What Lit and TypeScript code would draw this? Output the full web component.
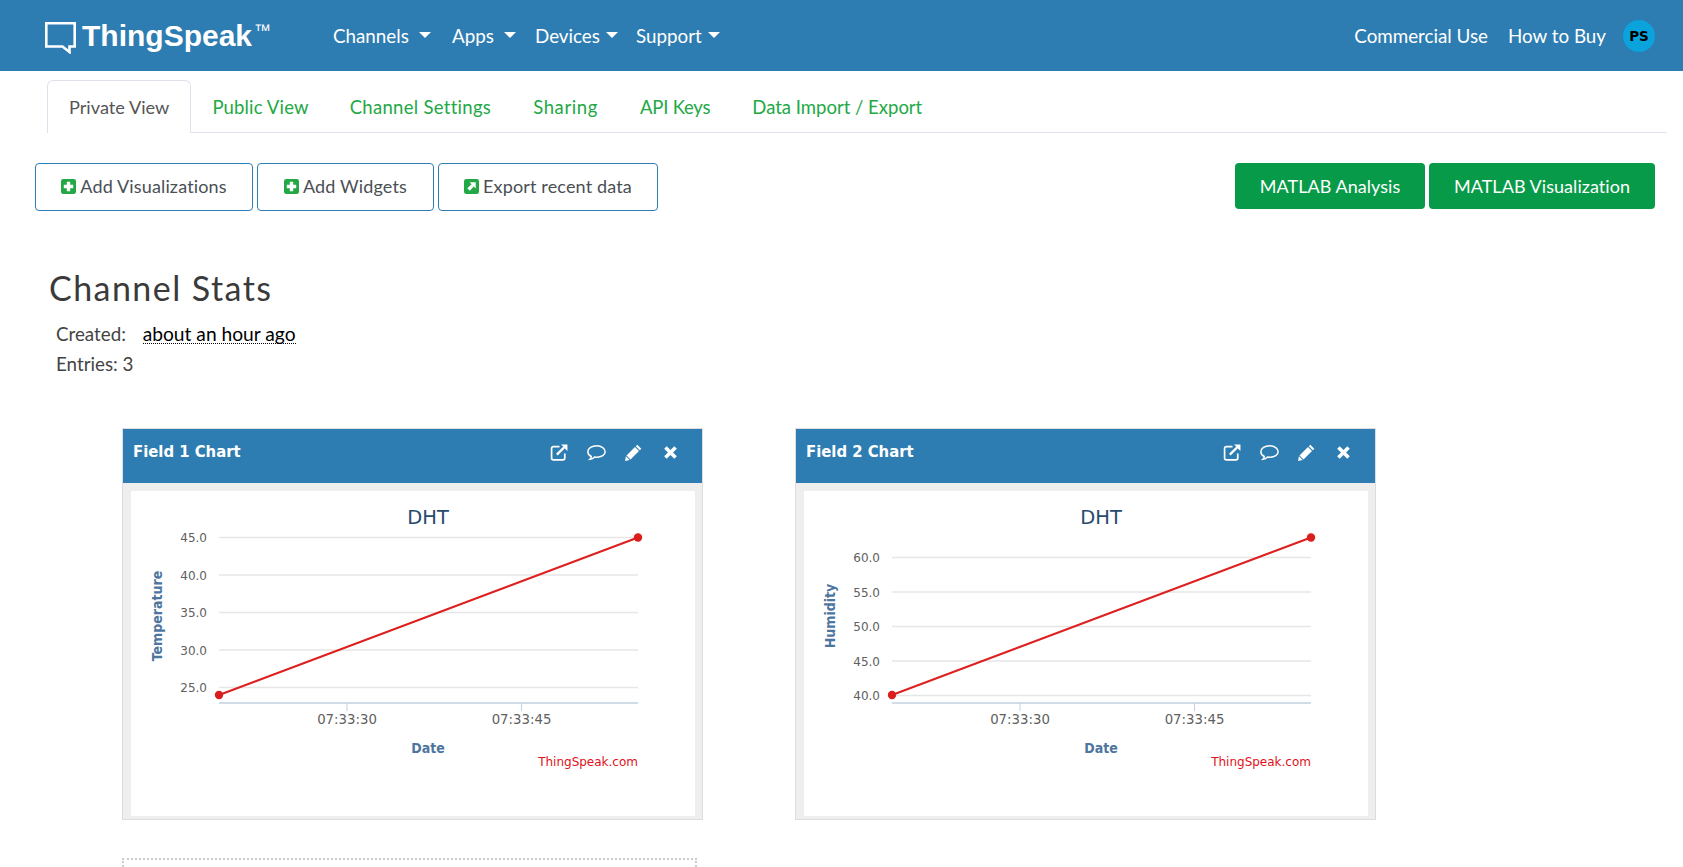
import { LitElement, html, css, svg } from "lit";
import { customElement } from "lit/decorators.js";

interface ChartData {
  title: string;
  yTitle: string;
  grid: { label: string; y: number }[];
  startY: number;
}

const CHARTS: ChartData[] = [
  {
    title: "Field 1 Chart",
    yTitle: "Temperature",
    grid: [
      { label: "45.0", y: 46.5 },
      { label: "40.0", y: 84 },
      { label: "35.0", y: 121.5 },
      { label: "30.0", y: 159 },
      { label: "25.0", y: 196.5 },
    ],
    startY: 204,
  },
  {
    title: "Field 2 Chart",
    yTitle: "Humidity",
    grid: [
      { label: "60.0", y: 66.5 },
      { label: "55.0", y: 101 },
      { label: "50.0", y: 135.5 },
      { label: "45.0", y: 170 },
      { label: "40.0", y: 204.5 },
    ],
    startY: 204,
  },
];

const plus = html`<svg class="bi" viewBox="0 0 16 16"><rect width="16" height="16" rx="2.5" fill="#22a845"/><path d="M6.2 3h3.6v3.2H13v3.6H9.8V13H6.2V9.8H3V6.2h3.2z" fill="#fff"/></svg>`;
const exportIcon = html`<svg class="bi" viewBox="0 0 16 16"><rect width="16" height="16" rx="2.5" fill="#22a845"/><path d="M6 3.5h6.5V10L10.4 7.9 6.2 12.5 3.5 9.8 8.1 5.6z" fill="#fff"/></svg>`;

const caret = html`<span class="caret"></span>`;

@customElement("app-root")
export class AppRoot extends LitElement {
  static styles = css`
    :host { display: block; height: 867px; overflow: hidden; background: #fff; font-family: "Lato", "Liberation Sans", sans-serif; color: #444; }
    .nav { height: 71px; background: #2e7db2; color: #fff; display: flex; align-items: center; padding: 0 28px 0 45px; box-sizing: border-box; }
    .logo { display: flex; align-items: center; width: 288px; flex: none; margin-top: 5px; }
    .logo svg { width: 31px; height: 32px; margin-right: 6px; flex: none; }
    .brand { font: bold 30px "Liberation Sans", sans-serif; line-height: 32px; margin-top: -4px; }
    .brand sup { font-size: 17px; font-weight: normal; line-height: 0; vertical-align: 10px; margin-left: 2px; }
    .menu { display: flex; font-size: 18.8px; }
    .menu span.item { display: flex; align-items: center; }
    .caret { display: inline-block; width: 0; height: 0; border-left: 6px solid transparent; border-right: 6px solid transparent; border-top: 6px solid #fff; margin-left: 6px; margin-top: -2px; }
    .spaced .caret { margin-left: 10px; }
    .i-channels { width: 119px; } .i-apps { width: 83px; } .i-devices { width: 101px; }
    .right { margin-left: auto; display: flex; align-items: center; font-size: 18.8px; }
    .right span.link { margin-right: 20px; }
    .right span.link + .avatar { margin-left: -3px; }
    .avatar { width: 32px; height: 32px; border-radius: 50%; background: #0aa3dc; color: #000; font: bold 13.5px "DejaVu Sans", sans-serif; display: flex; align-items: center; justify-content: center; }
    .tabs { margin: 9px 16px 0 47px; display: flex; height: 52px; border-bottom: 1px solid #dfe2ea; }
    .tab { padding: 1px 20px 0; margin-right: 2px; font-size: 18.5px; letter-spacing: .15px; color: #22a845; display: flex; align-items: center; box-sizing: border-box; height: 52px; }
    .tab.active { color: #555; background: #fff; font-size: 18.2px; letter-spacing: 0; height: 53px; border: 1px solid #dfe2ea; border-bottom: none; border-radius: 6px 6px 0 0; padding: 0 21px; margin-right: 1px; }
    .tab.public { margin-right: 1px; }
    .tab.settings { letter-spacing: .3px; }
    .tab.sharing { letter-spacing: .6px; }
    .tab.keys { letter-spacing: -.2px; }
    .tab.data { letter-spacing: 0; }
    .actions { display: flex; padding: 30px 28px 0 35px; }
    .btn { height: 48px; box-sizing: border-box; border: 1px solid #2e7db2; border-radius: 4px; display: flex; align-items: center; justify-content: center; font-size: 18px; letter-spacing: .15px; color: #4a4f55; background: #fff; margin-right: 4px; gap: 4px; padding-bottom: 2px; }
    .b1 { width: 218px; } .b2 { width: 177px; } .b3 { width: 220px; margin-right: 0; }
    .bi { width: 15px; height: 15px; flex: none; }
    .green { height: 46px; background: #079a48; border-radius: 4px; color: #fff; font-size: 18px; letter-spacing: .05px; display: flex; align-items: center; justify-content: center; padding-bottom: 1px; box-sizing: border-box; }
    .g1 { width: 190px; margin-left: auto; margin-right: 4px; }
    .g2 { width: 226px; }
    h1 { margin: 0; font-weight: 400; font-size: 34px; letter-spacing: 1.45px; color: #3a3a3a; line-height: 40px; padding: 57px 0 0 49px; }
    .stats { padding: 11px 0 0 56px; font-size: 18.8px; line-height: 30px; color: #444; }
    .ago { color: #000; border-bottom: 1px dotted #000; margin-left: 12px; line-height: 18px; display: inline-block; font-size: 19.2px; }
    .charts { display: flex; padding: 49px 0 0 122px; gap: 92px; }
    .box { width: 581px; height: 392px; box-sizing: border-box; border: 1px solid #ddd; background: #eee; display: flex; flex-direction: column; }
    .head { height: 54px; background: #2e7db2; color: #fff; display: flex; align-items: flex-start; padding: 14px 0 0 10px; box-sizing: border-box; flex: none; }
    .ctitle { font: bold 16.5px "DejaVu Sans Condensed", "DejaVu Sans", sans-serif; line-height: 18px; }
    .tools { margin-left: auto; display: flex; gap: 18px; margin-right: 22px; margin-top: 0; }
    .tools svg { width: 19px; height: 19px; display: block; }
    .inner { margin: 8px 7px 0 8px; background: #fff; height: 325px; flex: none; }
    .inner svg { display: block; }
    .dotted { margin: 38px 0 0 122px; width: 575px; height: 40px; box-sizing: border-box; border: 2px dotted #ccc; }
    text { font-family: "DejaVu Sans", sans-serif; }
    .t-title { font-size: 19.5px; fill: #274b6d; text-anchor: middle; }
    .t-label { font-size: 12px; fill: #606060; }
    .t-tick { font-size: 13.3px; fill: #606060; text-anchor: middle; }
    .t-axis { font-family: "DejaVu Sans Condensed", "DejaVu Sans", sans-serif; font-size: 14px; font-weight: bold; fill: #4d759e; text-anchor: middle; }
    .t-credit { font-size: 12px; fill: #e01020; text-anchor: end; }
  `;

  private chart(c: ChartData) {
    const x0 = 88, x1 = 507;
    return html`<svg width="566" height="325" viewBox="0 0 566 325">
      <text class="t-title" x="297" y="33">DHT</text>
      ${c.grid.map(
        (g) => svg`<line x1=${x0} x2=${x1} y1=${g.y} y2=${g.y} stroke="#e6e6e6" stroke-width="1.5"/>
        <text class="t-label" x="76" y=${g.y + 4.5} text-anchor="end">${g.label}</text>`
      )}
      <line x1=${x0} x2=${x1} y1="212" y2="212" stroke="#c0d0e0" stroke-width="1.5"/>
      <line x1="216" x2="216" y1="212" y2="220" stroke="#c0d0e0"/>
      <line x1="390.5" x2="390.5" y1="212" y2="220" stroke="#c0d0e0"/>
      <text class="t-tick" x="216" y="232.5">07:33:30</text>
      <text class="t-tick" x="390.5" y="232.5">07:33:45</text>
      <text class="t-axis" x="297" y="262">Date</text>
      <text class="t-axis" transform="translate(31 125) rotate(-90)">${c.yTitle}</text>
      <text class="t-credit" x=${x1} y="275">ThingSpeak.com</text>
      <line x1=${x0} y1=${c.startY} x2=${x1} y2="46.5" stroke="#de1f1f" stroke-width="2"/>
      <circle cx=${x0} cy=${c.startY} r="4.2" fill="#d91e1e"/>
      <circle cx=${x1} cy="46.5" r="4.2" fill="#d91e1e"/>
    </svg>`;
  }

  private tools() {
    return html`<div class="tools">
      <svg viewBox="0 0 18 18" fill="none" stroke="#fff"><path d="M9 3.5H3.2A1.7 1.7 0 0 0 1.5 5.2v9.1A1.7 1.7 0 0 0 3.2 16h9.1a1.7 1.7 0 0 0 1.7-1.7V10" stroke-width="1.6"/><path d="M6.5 11 13.5 4" stroke-width="2.2"/><path d="M10.5 1.5H16.5V7.5Z" fill="#fff" stroke="none"/></svg>
      <svg viewBox="0 0 18 18" fill="none" stroke="#fff" stroke-width="1.4"><path d="M9.3 2.5C4.7 2.5.8 5 .8 8.3c0 2 1.4 3.600 3.300 4.500-.1 1-.6 2-1.300 2.700 1.700-.2 3.300-1 4.400-2.200.7.1 1.400.2 2.100.2 4.500 0 7.900-2.300 7.900-5.200S13.800 2.500 9.300 2.500z"/></svg>
      <svg viewBox="0 0 18 18" fill="#fff"><path d="M12.600 1.600 16.400 5.400 15 6.800 11.200 3z"/><path d="M10.400 3.800 14.200 7.600 6.200 15.600 2.400 11.800z"/><path d="M1.800 12.600 5.400 16.200 1 17z"/></svg>
      <svg viewBox="0 0 18 18" fill="#fff"><path d="M3 5.400 5.400 3 9 6.600 12.600 3 15 5.400 11.400 9 15 12.600 12.600 15 9 11.400 5.400 15 3 12.600 6.600 9z"/></svg>
    </div>`;
  }

  render() {
    return html`
      <div class="nav">
        <div class="logo">
          <svg viewBox="0 0 31 32" fill="none" stroke="#fff" stroke-width="2.6"><path d="M1.300 1.300H29.700V24.500H24.500V30L17.500 24.500H1.300Z"/></svg>
          <span class="brand">ThingSpeak<sup>™</sup></span>
        </div>
        <div class="menu">
          <span class="item spaced i-channels">Channels${caret}</span>
          <span class="item spaced i-apps">Apps${caret}</span>
          <span class="item i-devices">Devices${caret}</span>
          <span class="item">Support${caret}</span>
        </div>
        <div class="right">
          <span class="link">Commercial Use</span>
          <span class="link">How to Buy</span>
          <span class="avatar">PS</span>
        </div>
      </div>
      <div class="tabs">
        <div class="tab active">Private View</div>
        <div class="tab public">Public View</div>
        <div class="tab settings">Channel Settings</div>
        <div class="tab sharing">Sharing</div>
        <div class="tab keys">API Keys</div>
        <div class="tab data">Data Import / Export</div>
      </div>
      <div class="actions">
        <div class="btn b1">${plus}Add Visualizations</div>
        <div class="btn b2">${plus}Add Widgets</div>
        <div class="btn b3">${exportIcon}Export recent data</div>
        <div class="green g1">MATLAB Analysis</div>
        <div class="green g2">MATLAB Visualization</div>
      </div>
      <h1>Channel Stats</h1>
      <div class="stats">
        <div>Created: <span class="ago">about an hour ago</span></div>
        <div>Entries: 3</div>
      </div>
      <div class="charts">
        ${CHARTS.map(
          (c) => html`<div class="box">
            <div class="head"><span class="ctitle">${c.title}</span>${this.tools()}</div>
            <div class="inner">${this.chart(c)}</div>
          </div>`
        )}
      </div>
      <div class="dotted"></div>
    `;
  }
}
